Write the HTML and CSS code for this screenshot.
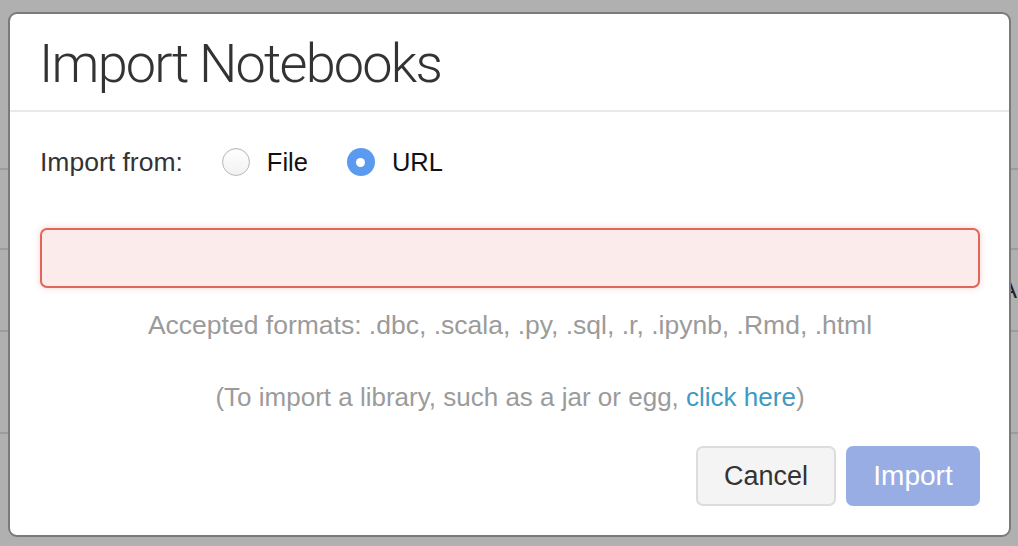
FILE: index.html
```html
<!DOCTYPE html>
<html>
<head>
<meta charset="utf-8">
<link rel="stylesheet" href="styles.css">
</head>
<body>
<div class="page">
  <div class="row r1"></div>
  <div class="row r2"></div>
  <div class="row r3"><span class="peek">A</span></div>
  <div class="row r4"></div>
</div>
<div class="modal">
  <div class="modal-header">
    <h1 class="title">Import Notebooks</h1>
  </div>
  <div class="modal-body">
    <div class="source-row">
      <span class="source-label">Import from:</span>
      <label class="option"><span class="radio"></span><span class="option-text">File</span></label>
      <label class="option"><span class="radio checked"></span><span class="option-text">URL</span></label>
    </div>
    <div class="url-input"></div>
    <p class="hint formats">Accepted formats: .dbc, .scala, .py, .sql, .r, .ipynb, .Rmd, .html</p>
    <p class="hint library">(To import a library, such as a jar or egg, <a class="link">click here</a>)</p>
    <div class="actions">
      <button class="btn btn-cancel">Cancel</button>
      <button class="btn btn-import">Import</button>
    </div>
  </div>
</div>
</body>
</html>
```

FILE: styles.css
```css
* { box-sizing: border-box; }
html, body {
  margin: 0;
  padding: 0;
}
body {
  width: 1018px;
  height: 546px;
  overflow: hidden;
  background: #b0b0b0;
  position: relative;
  font-family: "Liberation Sans", Arial, sans-serif;
}
.page {
  display: flex;
  flex-direction: column;
}
.row {
  border-bottom: 2px solid #9b9b9b;
  position: relative;
}
.r1 { height: 170px; }
.r2 { height: 80px; }
.r3 { height: 82px; }
.r4 { height: 102px; }
.peek {
  position: absolute;
  left: 1001px;
  top: 26px;
  font-size: 24px;
  line-height: 28px;
  color: #222;
}
.modal {
  position: absolute;
  left: 8px;
  top: 12px;
  width: 1003px;
  height: 525px;
  background: #fff;
  border: 2px solid #7a7a7a;
  border-radius: 9px;
  overflow: hidden;
}
.modal-header {
  padding: 19.5px 30px 16.5px 29px;
  border-bottom: 2px solid #e9e9e9;
}
.title {
  margin: 0;
  font-family: "Roboto", "Liberation Sans", sans-serif;
  font-weight: 300;
  font-size: 54px;
  line-height: 60px;
  color: #333;
  letter-spacing: -1.8px;
}
.modal-body {
  padding: 32px 29px 0 30px;
}
.source-row {
  display: flex;
  align-items: center;
  height: 36px;
  font-size: 26.5px;
}
.source-label {
  color: #333;
  margin-right: 39px;
}
.option {
  display: flex;
  align-items: center;
  margin-right: 39px;
}
.option-text {
  margin-left: 17px;
  color: #111;
  font-size: 25.5px;
}
.radio {
  width: 28px;
  height: 28px;
  border-radius: 50%;
  border: 1px solid #b9b9b9;
  background: linear-gradient(#ffffff, #f1f1f1);
  box-shadow: inset 0 1px 1px rgba(0,0,0,0.06);
  display: flex;
  align-items: center;
  justify-content: center;
}
.radio.checked {
  border: none;
  background: #5a9bf0;
  box-shadow: none;
}
.radio.checked::after {
  content: "";
  width: 9px;
  height: 9px;
  border-radius: 50%;
  background: #fff;
}
.url-input {
  margin-top: 48px;
  height: 60px;
  border: 2px solid #e0655b;
  border-radius: 7px;
  background: #fbeceb;
  box-shadow: 0 0 6px rgba(224, 101, 91, 0.3);
}
.hint {
  margin: 0;
  text-align: center;
  font-size: 26px;
  line-height: 36px;
  color: #9b9b9b;
}
.formats {
  margin-top: 19px;
  font-size: 26.5px;
}
.library { margin-top: 36px; }
.link {
  color: #3e9ac2;
  text-decoration: none;
}
.actions {
  display: flex;
  justify-content: flex-end;
  gap: 10px;
  margin-top: 31px;
}
.btn {
  height: 60px;
  border-radius: 7px;
  font-family: "Liberation Sans", Arial, sans-serif;
  font-size: 27px;
  padding: 0 24px;
}
.btn-cancel {
  width: 140px;
  background: #f4f4f4;
  border: 2px solid #dcdcdc;
  color: #333;
}
.btn-import {
  width: 134px;
  background: #98ade4;
  border: 2px solid #98ade4;
  color: #fff;
  font-size: 28px;
}
```
